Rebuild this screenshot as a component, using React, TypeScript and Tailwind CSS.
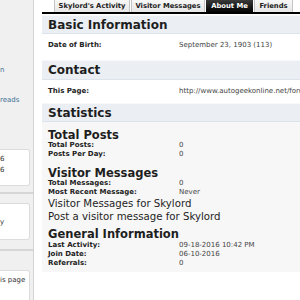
import React from "react";

const font = "font-['DejaVu_Sans',Verdana,sans-serif]";

function Header({ title, h = "h-[19px]" }: { title: string; h?: string }) {
  return (
    <div className={`${h} flex items-center bg-[#ebeff4] border-t border-[#f6f8fa] border-b border-b-[#dde3ea] pl-[6px] text-[12px] font-bold text-[#1e1e1e] leading-none whitespace-nowrap`}>
      {title}
    </div>
  );
}

function Row({ label, value, h }: { label: string; value: string; h: string }) {
  return (
    <div className={`${h} flex items-center pl-[6px] whitespace-nowrap overflow-hidden`}>
      <div className="w-[131px] shrink-0 text-[7px] font-bold text-[#222]">{label}</div>
      <div className="text-[7px] text-[#444]">{value}</div>
    </div>
  );
}

function Stat({ label, value }: { label: string; value: string }) {
  return (
    <div className="flex h-[9px] items-center whitespace-nowrap leading-[9px]">
      <div className="w-[131px] shrink-0 text-[7px] font-bold text-[#222]">{label}</div>
      <div className="text-[7px] text-[#444]">{value}</div>
    </div>
  );
}

function SubHead({ children, mt }: { children: React.ReactNode; mt: string }) {
  return (
    <div className={`${mt} h-[12px] text-[11.5px] font-bold leading-[12px] text-[#1e1e1e] whitespace-nowrap`}>
      {children}
    </div>
  );
}

export default function App() {
  return (
    <div className={`w-[300px] h-[300px] overflow-hidden flex bg-white ${font}`}>
      {/* Sidebar */}
      <div className="w-[34px] shrink-0 bg-[#f0f0f0] border-r border-[#d4d4d4] flex flex-col overflow-hidden">
        <div className="h-[149px] shrink-0 flex flex-col text-[7px] text-[#3f6f93] whitespace-nowrap">
          <div className="mt-[66px] leading-[9px]">n</div>
          <div className="mt-[21px] leading-[9px]">reads</div>
        </div>
        <div className="h-[37px] shrink-0 mr-[3px] bg-white border border-l-0 border-[#dcdcdc] rounded-r-[3px] pt-[4px] text-[7px] leading-[11px] text-[#333]">
          <div>6</div>
          <div>6</div>
        </div>
        <div className="h-[17px] shrink-0 flex flex-col">
          <div className="h-[6px]" />
          <div className="h-[2px] bg-[#d6d6d6]" />
        </div>
        <div className="h-[37px] shrink-0 mr-[3px] bg-white border border-l-0 border-[#dcdcdc] rounded-r-[3px] pt-[14px] text-[7px] leading-[9px] text-[#333]">
          y
        </div>
        <div className="h-[30px] shrink-0 flex flex-col">
          <div className="h-[9px]" />
          <div className="h-[2px] bg-[#d6d6d6]" />
        </div>
        <div className="h-[40px] shrink-0 mr-[3px] bg-white border border-l-0 border-[#dcdcdc] rounded-tr-[3px] pt-[5px] text-[7px] leading-[9px] text-[#333] whitespace-nowrap">
          is page
        </div>
      </div>

      {/* Main */}
      <div className="flex-1 min-w-0 pl-[8px] flex flex-col overflow-hidden">
        {/* Tabs */}
        <div className="h-[12px] shrink-0 flex items-end pl-[12px] gap-[1px] text-[6.8px] font-bold whitespace-nowrap">
          <div className="w-[76px] h-[12px] flex items-center justify-center bg-gradient-to-b from-[#f8f8f8] to-[#e6e6e6] border-x border-[#c4c4c4] text-[#222]">
            Skylord's Activity
          </div>
          <div className="w-[74px] h-[12px] flex items-center justify-center bg-gradient-to-b from-[#f8f8f8] to-[#e6e6e6] border-x border-[#c4c4c4] text-[#222]">
            Visitor Messages
          </div>
          <div className="w-[47px] h-[12px] flex items-center justify-center bg-gradient-to-b from-[#3a3a3a] to-[#050505] text-white">
            About Me
          </div>
          <div className="w-[39px] h-[12px] flex items-center justify-center bg-gradient-to-b from-[#f8f8f8] to-[#e6e6e6] border-x border-[#c4c4c4] text-[#222]">
            Friends
          </div>
        </div>
        <div className="h-[2px] shrink-0 bg-black" />

        <div className="mt-[1px]">
          <Header title="Basic Information" />
          <Row label="Date of Birth:" value="September 23, 1903 (113)" h="h-[22px]" />
        </div>

        <div className="mt-[4px]">
          <Header title="Contact" h="h-[20px]" />
          <Row label="This Page:" value="http://www.autogeekonline.net/forum/members/skylord.html" h="h-[23px]" />
        </div>

        <div className="mt-[0px]">
          <Header title="Statistics" />
          <div className="bg-[#f7f7f7] pl-[6px] pt-[7px] pb-[4px]">
            <SubHead mt="mt-0">Total Posts</SubHead>
            <Stat label="Total Posts:" value="0" />
            <Stat label="Posts Per Day:" value="0" />
            <SubHead mt="mt-[8px]">Visitor Messages</SubHead>
            <Stat label="Total Messages:" value="0" />
            <Stat label="Most Recent Message:" value="Never" />
            <div className="text-[10.2px] leading-[13px] text-[#1e1e1e] whitespace-nowrap">
              <div>Visitor Messages for Skylord</div>
              <div>Post a visitor message for Skylord</div>
            </div>
            <SubHead mt="mt-[5px]">General Information</SubHead>
            <div className="mt-[1px]">
              <Stat label="Last Activity:" value="09-18-2016 10:42 PM" />
              <Stat label="Join Date:" value="06-10-2016" />
              <Stat label="Referrals:" value="0" />
            </div>
          </div>
        </div>
      </div>
    </div>
  );
}
